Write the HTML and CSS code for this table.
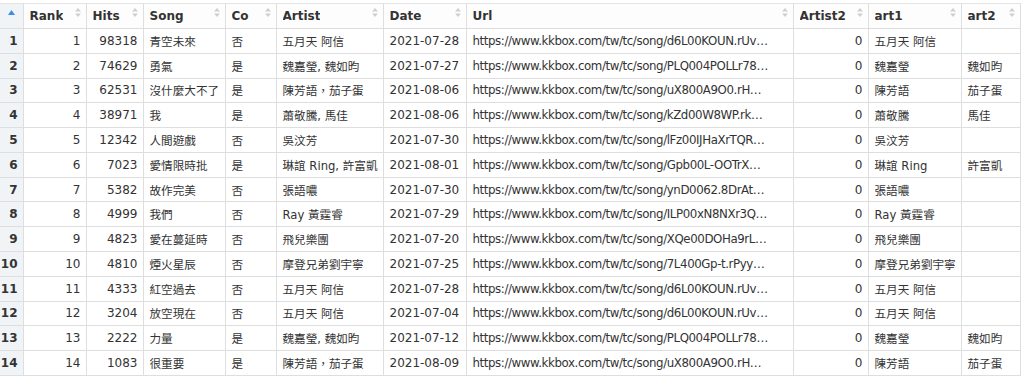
FILE: index.html
```html
<!DOCTYPE html>
<html>
<head>
<meta charset="utf-8">
<link rel="stylesheet" href="styles.css">
</head>
<body>
<table class="grid">
  <colgroup>
    <col class="c-idx"><col class="c-rank"><col class="c-hits"><col class="c-song"><col class="c-co"><col class="c-artist"><col class="c-date"><col class="c-url"><col class="c-artist2"><col class="c-art1"><col class="c-art2">
  </colgroup>
  <thead>
    <tr>
      <th class="idx-head"><svg class="sorted" width="7" height="5" viewBox="0 0 7 5"><polygon points="3.5,0 7,5 0,5"/></svg></th>
      <th><div class="hd"><span>Rank</span><svg class="sort" width="6" height="9" viewBox="0 0 6 9"><polygon points="3,0 6,3.5 0,3.5"/><polygon points="0,5.5 6,5.5 3,9"/></svg></div></th>
      <th><div class="hd"><span>Hits</span><svg class="sort" width="6" height="9" viewBox="0 0 6 9"><polygon points="3,0 6,3.5 0,3.5"/><polygon points="0,5.5 6,5.5 3,9"/></svg></div></th>
      <th><div class="hd"><span>Song</span><svg class="sort" width="6" height="9" viewBox="0 0 6 9"><polygon points="3,0 6,3.5 0,3.5"/><polygon points="0,5.5 6,5.5 3,9"/></svg></div></th>
      <th><div class="hd"><span>Co</span><svg class="sort" width="6" height="9" viewBox="0 0 6 9"><polygon points="3,0 6,3.5 0,3.5"/><polygon points="0,5.5 6,5.5 3,9"/></svg></div></th>
      <th><div class="hd"><span>Artist</span><svg class="sort" width="6" height="9" viewBox="0 0 6 9"><polygon points="3,0 6,3.5 0,3.5"/><polygon points="0,5.5 6,5.5 3,9"/></svg></div></th>
      <th><div class="hd"><span>Date</span><svg class="sort" width="6" height="9" viewBox="0 0 6 9"><polygon points="3,0 6,3.5 0,3.5"/><polygon points="0,5.5 6,5.5 3,9"/></svg></div></th>
      <th><div class="hd"><span>Url</span><svg class="sort" width="6" height="9" viewBox="0 0 6 9"><polygon points="3,0 6,3.5 0,3.5"/><polygon points="0,5.5 6,5.5 3,9"/></svg></div></th>
      <th><div class="hd"><span>Artist2</span><svg class="sort" width="6" height="9" viewBox="0 0 6 9"><polygon points="3,0 6,3.5 0,3.5"/><polygon points="0,5.5 6,5.5 3,9"/></svg></div></th>
      <th><div class="hd"><span>art1</span><svg class="sort" width="6" height="9" viewBox="0 0 6 9"><polygon points="3,0 6,3.5 0,3.5"/><polygon points="0,5.5 6,5.5 3,9"/></svg></div></th>
      <th><div class="hd"><span>art2</span><svg class="sort" width="6" height="9" viewBox="0 0 6 9"><polygon points="3,0 6,3.5 0,3.5"/><polygon points="0,5.5 6,5.5 3,9"/></svg></div></th>
    </tr>
  </thead>
  <tbody>
    <tr><td class="idx">1</td><td class="num">1</td><td class="num">98318</td><td>青空未來</td><td>否</td><td>五月天 阿信</td><td class="date">2021-07-28</td><td class="url">https://www.kkbox.com/tw/tc/song/d6L00KOUN.rUv…</td><td class="num">0</td><td>五月天 阿信</td><td></td></tr>
    <tr><td class="idx">2</td><td class="num">2</td><td class="num">74629</td><td>勇氣</td><td>是</td><td>魏嘉瑩, 魏如昀</td><td class="date">2021-07-27</td><td class="url">https://www.kkbox.com/tw/tc/song/PLQ004POLLr78…</td><td class="num">0</td><td>魏嘉瑩</td><td>魏如昀</td></tr>
    <tr><td class="idx">3</td><td class="num">3</td><td class="num">62531</td><td>沒什麼大不了</td><td>是</td><td>陳芳語，茄子蛋</td><td class="date">2021-08-06</td><td class="url">https://www.kkbox.com/tw/tc/song/uX800A9O0.rH…</td><td class="num">0</td><td>陳芳語</td><td>茄子蛋</td></tr>
    <tr><td class="idx">4</td><td class="num">4</td><td class="num">38971</td><td>我</td><td>是</td><td>蕭敬騰, 馬佳</td><td class="date">2021-08-06</td><td class="url">https://www.kkbox.com/tw/tc/song/kZd00W8WP.rk…</td><td class="num">0</td><td>蕭敬騰</td><td>馬佳</td></tr>
    <tr><td class="idx">5</td><td class="num">5</td><td class="num">12342</td><td>人間遊戲</td><td>否</td><td>吳汶芳</td><td class="date">2021-07-30</td><td class="url">https://www.kkbox.com/tw/tc/song/lFz00IJHaXrTQR…</td><td class="num">0</td><td>吳汶芳</td><td></td></tr>
    <tr><td class="idx">6</td><td class="num">6</td><td class="num">7023</td><td>愛情限時批</td><td>是</td><td>琳誼 Ring, 許富凱</td><td class="date">2021-08-01</td><td class="url">https://www.kkbox.com/tw/tc/song/Gpb00L-OOTrX…</td><td class="num">0</td><td>琳誼 Ring</td><td>許富凱</td></tr>
    <tr><td class="idx">7</td><td class="num">7</td><td class="num">5382</td><td>故作完美</td><td>否</td><td>張語噥</td><td class="date">2021-07-30</td><td class="url">https://www.kkbox.com/tw/tc/song/ynD0062.8DrAt…</td><td class="num">0</td><td>張語噥</td><td></td></tr>
    <tr><td class="idx">8</td><td class="num">8</td><td class="num">4999</td><td>我們</td><td>否</td><td>Ray 黃霆睿</td><td class="date">2021-07-29</td><td class="url">https://www.kkbox.com/tw/tc/song/ILP00xN8NXr3Q…</td><td class="num">0</td><td>Ray 黃霆睿</td><td></td></tr>
    <tr><td class="idx">9</td><td class="num">9</td><td class="num">4823</td><td>愛在蔓延時</td><td>否</td><td>飛兒樂團</td><td class="date">2021-07-20</td><td class="url">https://www.kkbox.com/tw/tc/song/XQe00DOHa9rL…</td><td class="num">0</td><td>飛兒樂團</td><td></td></tr>
    <tr><td class="idx">10</td><td class="num">10</td><td class="num">4810</td><td>煙火星辰</td><td>否</td><td>摩登兄弟劉宇寧</td><td class="date">2021-07-25</td><td class="url">https://www.kkbox.com/tw/tc/song/7L400Gp-t.rPyy…</td><td class="num">0</td><td>摩登兄弟劉宇寧</td><td></td></tr>
    <tr><td class="idx">11</td><td class="num">11</td><td class="num">4333</td><td>紅空過去</td><td>否</td><td>五月天 阿信</td><td class="date">2021-07-28</td><td class="url">https://www.kkbox.com/tw/tc/song/d6L00KOUN.rUv…</td><td class="num">0</td><td>五月天 阿信</td><td></td></tr>
    <tr><td class="idx">12</td><td class="num">12</td><td class="num">3204</td><td>放空現在</td><td>否</td><td>五月天 阿信</td><td class="date">2021-07-04</td><td class="url">https://www.kkbox.com/tw/tc/song/d6L00KOUN.rUv…</td><td class="num">0</td><td>五月天 阿信</td><td></td></tr>
    <tr><td class="idx">13</td><td class="num">13</td><td class="num">2222</td><td>力量</td><td>是</td><td>魏嘉瑩, 魏如昀</td><td class="date">2021-07-12</td><td class="url">https://www.kkbox.com/tw/tc/song/PLQ004POLLr78…</td><td class="num">0</td><td>魏嘉瑩</td><td>魏如昀</td></tr>
    <tr><td class="idx">14</td><td class="num">14</td><td class="num">1083</td><td>很重要</td><td>是</td><td>陳芳語，茄子蛋</td><td class="date">2021-08-09</td><td class="url">https://www.kkbox.com/tw/tc/song/uX800A9O0.rH…</td><td class="num">0</td><td>陳芳語</td><td>茄子蛋</td></tr>
  </tbody>
</table>
</body>
</html>
```
FILE: styles.css
```css
html, body {
  margin: 0;
  padding: 0;
  background: #ffffff;
}
body {
  padding-top: 3px;
  font-family: "DejaVu Sans", "Noto Sans CJK TC", sans-serif;
  font-size: 12px;
  color: #333333;
}
.grid {
  border-collapse: collapse;
  table-layout: fixed;
  width: 1020px;
}
.c-idx { width: 23px; }
.c-rank { width: 63px; }
.c-hits { width: 57px; }
.c-song { width: 82px; }
.c-co { width: 51px; }
.c-artist { width: 107px; }
.c-date { width: 83px; }
.c-url { width: 327px; }
.c-artist2 { width: 75px; }
.c-art1 { width: 93px; }
.c-art2 { width: 59px; }

.grid th, .grid td {
  border: 1px solid #dedede;
  padding: 0 3px 0 6px;
  white-space: nowrap;
  overflow: hidden;
  text-overflow: clip;
  text-align: left;
}
.grid td {
  font-size: 11.6px;
}
.grid td.num, .grid td.date, .grid td.idx {
  font-size: 12px;
}
.grid td.url {
  font-size: 11.8px;
  letter-spacing: -0.4px;
}
.grid th:first-child, .grid td:first-child {
  border-left: none;
}
.grid thead tr {
  height: 25px;
}
.grid tbody tr {
  height: 24.79px;
}
.grid th {
  font-weight: bold;
  background: #fdfdfd;
  border-top-color: #e4e4e4;
  padding: 0 5px 0 6px;
}
.hd {
  display: flex;
  justify-content: space-between;
  align-items: center;
}
.hd span {
  overflow: hidden;
}
.sort {
  fill: #cfcfcf;
  flex: none;
  margin-top: -7px;
}
.idx-head {
  background: #f1f4f7 !important;
  text-align: center !important;
  padding: 0 !important;
}
.sorted {
  fill: #3b8fe0;
  display: block;
  margin: -6px auto 0 auto;
}
.idx {
  background: #f1f4f7;
  font-weight: bold;
  text-align: right !important;
  padding: 0 5px 0 0 !important;
}
.num {
  text-align: right !important;
  padding-right: 5px !important;
}
```
